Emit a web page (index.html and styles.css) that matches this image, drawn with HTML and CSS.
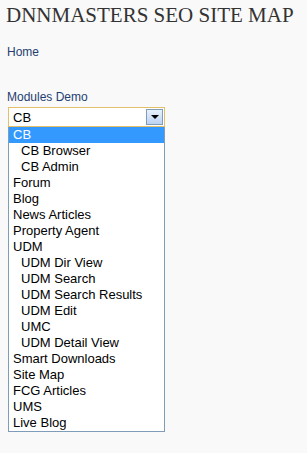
FILE: index.html
```html
<!DOCTYPE html>
<html lang="en">
<head>
    <meta charset="UTF-8">
    <title>DNNMasters SEO Site Map</title>
    <link rel="stylesheet" href="styles.css">
</head>
<body>

    <h1 class="title">DNNMASTERS SEO SITE MAP</h1>

    <a class="link home-link" href="#">Home</a>

    <div class="module">
        <a class="link" href="#">Modules Demo</a>
        <div class="combo">
            <div class="combo-box">
                <span class="combo-value">CB</span>
                <span class="combo-arrow"></span>
            </div>
            <ul class="combo-list">
                <li class="selected">CB</li>
                <li class="sub">CB Browser</li>
                <li class="sub">CB Admin</li>
                <li>Forum</li>
                <li>Blog</li>
                <li>News Articles</li>
                <li>Property Agent</li>
                <li>UDM</li>
                <li class="sub">UDM Dir View</li>
                <li class="sub">UDM Search</li>
                <li class="sub">UDM Search Results</li>
                <li class="sub">UDM Edit</li>
                <li class="sub">UMC</li>
                <li class="sub">UDM Detail View</li>
                <li>Smart Downloads</li>
                <li>Site Map</li>
                <li>FCG Articles</li>
                <li>UMS</li>
                <li>Live Blog</li>
            </ul>
        </div>
    </div>

</body>
</html>
```

FILE: styles.css
```css
/* Site map page */
body {
    margin: 0;
    padding: 0 8px;
    background-color: #f9f9f9;
    font-family: "Liberation Sans", Arial, sans-serif;
    font-size: 12px;
}
.title {
    margin: 0;
    padding-top: 3px;
    margin-left: -2px;
    font-family: "Liberation Serif", "Times New Roman", serif;
    font-weight: normal;
    font-size: 21px;
    line-height: 24px;
    color: #333;
}
.link {
    display: block;
    color: #1f3e72;
    text-decoration: none;
    line-height: 14px;
    margin-left: -1px;
}
.home-link {
    margin-top: 18px;
}
.module {
    margin-top: 31px;
}
.combo {
    width: 157px;
    margin-top: 3px;
}
.combo-box {
    display: flex;
    align-items: center;
    justify-content: space-between;
    height: 18px;
    border: 1px solid #e2c06a;
    background-color: #fff;
    padding: 0 1px 0 4px;
    font-size: 13px;
}
.combo-arrow {
    position: relative;
    width: 15px;
    height: 14px;
    border: 1px solid #7f9db9;
    background: linear-gradient(#e9f1fc, #bcd3f3);
}
.combo-arrow::after {
    content: "";
    position: absolute;
    left: 4px;
    top: 5px;
    border-left: 4px solid transparent;
    border-right: 4px solid transparent;
    border-top: 4px solid #000;
}
.combo-list {
    list-style: none;
    margin: 0;
    padding: 0;
    border: 1px solid #7f9db9;
    border-top: 0;
    background-color: #fff;
    font-size: 13px;
}
.combo-list li {
    height: 16px;
    line-height: 16px;
    padding-left: 4px;
    color: #000;
}
.combo-list li.sub {
    padding-left: 12px;
}
.combo-list li.selected {
    background-color: #3399ff;
    color: #fff;
}
```
